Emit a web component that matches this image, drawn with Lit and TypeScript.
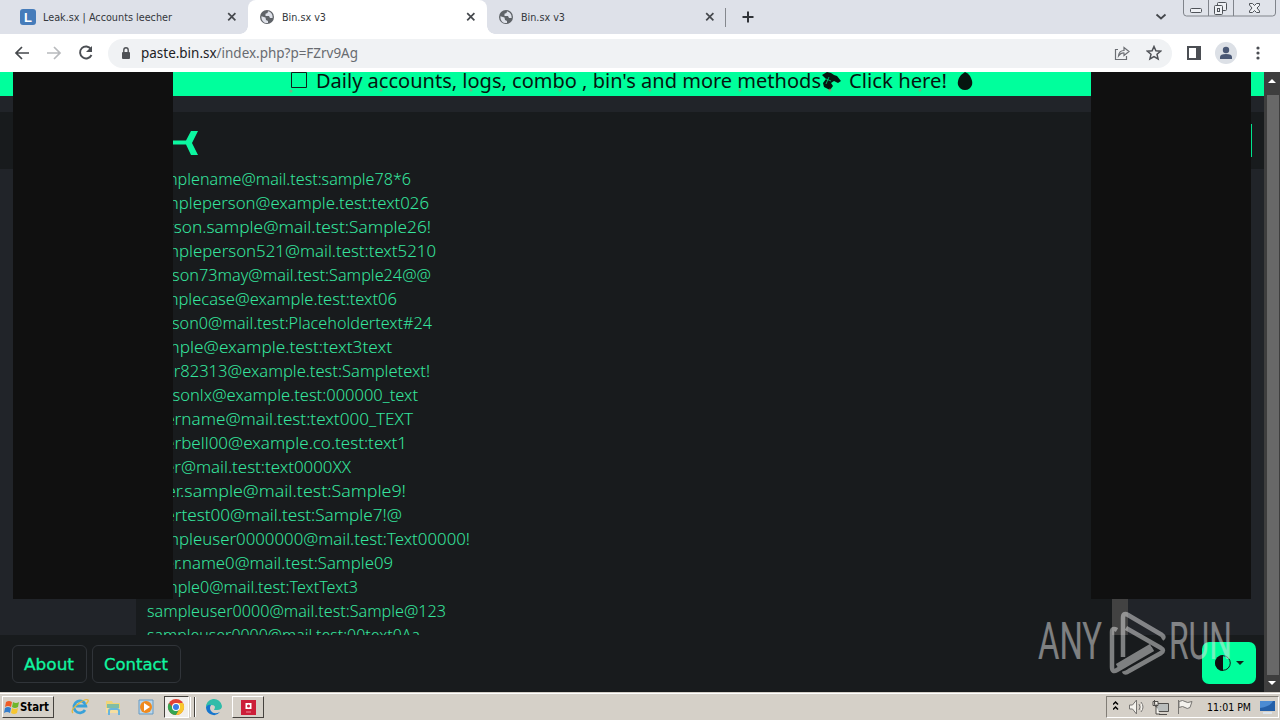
import { html, css, svg, LitElement } from 'lit';
import { customElement } from 'lit/decorators.js';

// Sample entries: text and rendered width
const ENTRIES: [string, number][] = [
  ['samplename@mail.test:sample78*6', 264],
  ['sampleperson@example.test:text026', 282],
  ['person.sample@mail.test:Sample26!', 284],
  ['sampleperson521@mail.test:text5210', 289],
  ['person73may@mail.test:Sample24@@', 284],
  ['samplecase@example.test:text06', 250],
  ['person0@mail.test:Placeholdertext#24', 285],
  ['sample@example.test:text3text', 245],
  ['user82313@example.test:Sampletext!', 283],
  ['personlx@example.test:000000_text', 271],
  ['username@mail.test:text000_TEXT', 266],
  ['userbell00@example.co.test:text1', 260],
  ['user@mail.test:text0000XX', 204],
  ['user.sample@mail.test:Sample9!', 259],
  ['usertest00@mail.test:Sample7!@', 255],
  ['sampleuser0000000@mail.test:Text00000!', 323],
  ['user.name0@mail.test:Sample09', 246],
  ['sample0@mail.test:TextText3', 211],
  ['sampleuser0000@mail.test:Sample@123', 299],
  ['sampleuser0000@mail.test:00text0Aa', 273],
];

const label = (text: string, width: number, size: number, height = 24, base = 17) => html`
  <svg class="label" width=${width} height=${height}>
    <text x="0" y=${base} font-size=${size} textLength=${width} lengthAdjust="spacingAndGlyphs">${text}</text>
  </svg>
`;

const globe = html`
  <svg width="16" height="16" viewBox="0 0 16 16">
    <circle cx="8" cy="8" r="7" fill="#5f6368" />
    <path d="M2.4 7.2 6.5 8.5 7 11l2 1v2C5 14.5 2.2 12 2.4 7.2M9 2.3 8.5 4l-2 .7V7H10l1 2h2.6C14 5.6 12 3 9 2.3" fill="#dee1e9" />
  </svg>
`;

const cross = html`
  <svg class="cross" width="10" height="10"><path d="m1.2 1.2 7.2 7.2m0-7.2L1.2 8.4" fill="none" stroke="#45484d" stroke-width="1.7" /></svg>
`;

@customElement('tab-strip')
class TabStrip extends LitElement {
  static styles = css`
    :host {
      display: flex;
      height: 34px;
      background: #dee1e9;
      color: #34373c;
      font-family: 'DejaVu Sans Condensed', 'DejaVu Sans', sans-serif;
    }

    svg {
      display: block;
      flex: none;
    }

    .label {
      overflow: visible;
      fill: currentColor;
    }

    .tab {
      display: flex;
      align-items: center;
      box-sizing: border-box;
      width: 239px;
      padding: 0 11px 0 11px;
      gap: 7px;
    }

    .tab_first {
      width: 248px;
      padding: 0 11px 0 20px;
    }

    .tab__letter {
      font-family: 'Liberation Sans', sans-serif;
      font-weight: 700;
    }

    .tab_active {
      position: relative;
      background: #fff;
      border-radius: 8px 8px 0 0;
    }

    .tab_active::before,
    .tab_active::after {
      content: '';
      position: absolute;
      bottom: 0;
      width: 8px;
      height: 8px;
    }

    .tab_active::before {
      left: -8px;
      background: radial-gradient(circle at 0 0, transparent 7.5px, #fff 8px);
    }

    .tab_active::after {
      right: -8px;
      background: radial-gradient(circle at 100% 0, transparent 7.5px, #fff 8px);
    }

    .cross {
      margin-left: auto;
    }

    .strip__divider {
      width: 1px;
      height: 19px;
      margin: 8px 0 0 -1px;
      background: #85888e;
    }

    .strip__plus {
      margin: 11px 0 0 16px;
    }

    .strip__chevron {
      margin: 13px 16px 0 auto;
    }

    .windows {
      margin-right: 4px;
    }
  `;

  render() {
    return html`
      <div class="tab tab_first">
        <svg width="16" height="16"><rect width="16" height="16" rx="3" fill="#467cba" /><text class="tab__letter" x="4" y="12.500" font-size="13" fill="#fff">L</text></svg>
        ${label('Leak.sx | Accounts leecher', 129, 11, 16, 12)} ${cross}
      </div>
      <div class="tab tab_active">${globe} ${label('Bin.sx v3', 44, 11, 16, 12)} ${cross}</div>
      <div class="tab">${globe} ${label('Bin.sx v3', 44, 11, 16, 12)} ${cross}</div>
      <div class="strip__divider"></div>
      <svg class="strip__plus" width="12" height="12"><path d="M6 .5v11M.5 6h11" stroke="#303338" stroke-width="2" /></svg>
      <svg class="strip__chevron" width="12" height="9"><path d="m1.5 1.5 4.5 4 4.500-4" fill="none" stroke="#44474c" stroke-width="1.800" /></svg>
      <svg class="windows" width="93" height="17" fill="#eef0f4" stroke="#80848b">
        <path d="M.5-1v14q0 3 3 3h86q3 0 3-3V-1z" fill="#e0e3ea" />
        <path d="M25.5 0v16M50.500 0v16" />
        <g stroke="#4f5359">
          <rect x="7.500" y="8.500" width="11" height="4" rx="1" />
          <rect x="34.500" y="2.500" width="9" height="8" rx="1" />
          <rect x="31.500" y="5.500" width="8" height="9" rx="1" />
          <rect x="34.500" y="8.500" width="2" height="3" />
          <path d="M66.500 3.500h3l2 2 2-2h3v2L74 8l2.500 3v1.500h-3l-2-2-2 2h-3V11L69 8l-2.500-3z" />
        </g>
      </svg>
    `;
  }
}

@customElement('nav-bar')
class NavBar extends LitElement {
  static styles = css`
    :host {
      display: flex;
      align-items: center;
      box-sizing: border-box;
      height: 38px;
      padding: 0 15px 0 14px;
      background: #fff;
      font-family: 'Noto Sans', sans-serif;
    }

    svg {
      display: block;
      flex: none;
    }

    .back,
    .forward {
      margin-right: 16px;
    }

    .label {
      overflow: visible;
    }

    .address {
      display: flex;
      align-items: center;
      box-sizing: border-box;
      width: 1064px;
      height: 29px;
      margin-left: 13px;
      padding: 0 10px 0 13px;
      border-radius: 15px;
      background: #f0f2f4;
    }

    .address__lock {
      margin-right: 10px;
    }

    .address__share {
      margin: 0 16px 0 auto;
    }

    .panel {
      margin: 0 14px 0 15px;
    }

    .menu {
      margin-left: auto;
    }
  `;

  render() {
    return html`
      <svg class="back" width="16" height="16"><path d="M15 8H2m6-6L2 8l6 6" fill="none" stroke="#45484c" stroke-width="1.7" /></svg>
      <svg class="forward" width="16" height="16"><path d="M1 8h13M8 2l6 6-6 6" fill="none" stroke="#b8babd" stroke-width="1.7" /></svg>
      <svg width="17" height="16"><path d="M13 4A6 6 0 1 0 13.500 10" fill="none" stroke="#4b4e53" stroke-width="1.900" /><path d="M14 1v6H8z" fill="#4b4e53" /></svg>
      <div class="address">
        <svg class="address__lock" width="10" height="13"><rect x="1" y="5" width="8" height="7" rx="1" fill="#4f5256" /><path d="M2.800 5V3a2.200 2.200 0 0 1 4.400 0v2" fill="none" stroke="#4f5256" stroke-width="1.400" /></svg>
        <svg class="label" width="217" height="20">
          <text y="15" font-size="14" textLength="217" lengthAdjust="spacingAndGlyphs" fill="#202124">paste.bin.sx<tspan fill="#686b70">/index.php?p=FZrv9Ag</tspan></text>
        </svg>
        <svg class="address__share" width="16" height="16"><path d="M4 4.500H1.500v10h11V11M4.500 11Q5 5.500 10 5.500V2.500l5 4-5 4V8Q7 7.500 4.500 11z" fill="none" stroke="#6b6e73" stroke-width="1.200" /></svg>
        <svg width="16" height="16"><path d="m8 1.500 1.900 4.300 4.700.4-3.600 3.100 1.100 4.600L8 11.500l-4.100 2.400L5 9.300 1.400 6.200l4.700-.4z" fill="none" stroke="#4f5257" stroke-width="1.500" /></svg>
      </div>
      <svg class="panel" width="14" height="14"><path d="M1 1h12v12H1z" fill="#fff" stroke="#4b4e53" stroke-width="2" /><path d="M9 1h4v12H9z" fill="#4b4e53" /></svg>
      <svg width="22" height="22"><circle cx="11" cy="11" r="11" fill="#dce0e6" /><circle cx="11" cy="8" r="3.200" fill="#4a5875" /><path d="M5 17v-2q0-3 6-3t6 3v2z" fill="#4a5875" /></svg>
      <svg class="menu" width="14" height="14" fill="#4b4e53"><circle cx="7" cy="2" r="1.600" /><circle cx="7" cy="7" r="1.600" /><circle cx="7" cy="12" r="1.600" /></svg>
    `;
  }
}

@customElement('paste-page')
class PastePage extends LitElement {
  static styles = css`
    :host {
      position: relative;
      display: flex;
      height: 620px;
      overflow: hidden;
      background: #212429;
      color: #00ff9c;
      font-family: 'DejaVu Sans Condensed', 'DejaVu Sans', sans-serif;
    }

    svg {
      display: block;
      flex: none;
    }

    .page {
      display: flex;
      flex-direction: column;
      width: 1264px;
    }

    .banner {
      height: 24px;
      margin-bottom: 16px;
      padding-left: 290px;
      background: #00ff9c;
      color: #06150f;
      font-family: 'Noto Sans', sans-serif;
    }

    .header {
      display: flex;
      align-items: center;
      box-sizing: border-box;
      height: 57px;
      padding: 5px 12px 0 171px;
      background: #181b1d;
    }

    .header__edge {
      width: 1px;
      height: 33px;
      margin: -6px 0 0 auto;
      background: #00e58f;
    }

    .paste {
      display: flex;
      box-sizing: border-box;
      width: 992px;
      height: 466px;
      margin-left: 136px;
      padding-left: 11px;
      overflow: hidden;
      background: #181b1d;
      color: #35e59d;
      font-family: 'Noto Sans', sans-serif;
      font-weight: 300;
    }

    .paste__lines {
      flex: 1;
    }

    .paste__bar {
      width: 16px;
      background: #424242;
    }

    .label {
      overflow: visible;
      fill: currentColor;
    }

    .footer {
      display: flex;
      align-items: flex-start;
      box-sizing: border-box;
      height: 57px;
      padding: 7px 8px 0 12px;
      gap: 5px;
      background: #181b1d;
      color: #10f5a0;
      font-family: 'DejaVu Sans', sans-serif;
    }

    .footer__button {
      box-sizing: border-box;
      height: 38px;
      margin-top: 3px;
      padding: 6px 12px 0 11px;
      border: 1px solid #303439;
      border-radius: 6px;
    }

    .footer__button .label {
      stroke: currentColor;
      stroke-width: 0.3px;
    }

    .footer__theme {
      display: flex;
      align-items: center;
      justify-content: center;
      gap: 5px;
      width: 54px;
      height: 42px;
      margin-left: auto;
      border-radius: 7px;
      background: #00ff9c;
    }

    .scroll {
      display: flex;
      flex-direction: column;
      align-items: center;
      width: 16px;
      background: #3e3e3e;
    }

    .scroll__thumb {
      width: 12px;
      flex: 1;
      margin: 0 1px 0 3px;
      background: #686868;
    }

    /* Ad slots float over the page */
    .ad {
      position: absolute;
      top: 0;
      left: 13px;
      width: 160px;
      height: 527px;
      background: #101010;
    }

    .ad_right {
      left: 1091px;
    }

    .watermark {
      position: absolute;
      left: 1036px;
      top: 536px;
      font-family: 'Roboto', sans-serif;
      overflow: visible;
    }
  `;

  render() {
    return html`
      <div class="page">
        <div class="banner">
          <svg class="label" width="690" height="24">
            <path d="M1.500 .500h15v15h-15z" fill="none" stroke="#10201a" />
            <text x="26" y="16" font-size="20" textLength="505" lengthAdjust="spacingAndGlyphs">Daily accounts, logs, combo , bin's and more methods</text>
            <path d="m532 3 5-3 4 1 3 2 3 1 4 5-3 2-4-2-3 2 2 3-3 4-6-3-1-4 3-4z" />
            <path d="m536 7 5 2m-2-4-3 7" stroke="#00ff9c" stroke-opacity=".6" />
            <text x="559" y="16" font-size="20" textLength="98" lengthAdjust="spacingAndGlyphs">Click here!</text>
            <path d="M675 0q3 1 5 4 3 5 2 9-2 5-7 5t-7-5q-1-5 3-10z" />
            <g fill="#c08573" opacity=".6"><circle cx="1" cy="19" r="1.500" /><circle cx="91" cy="18" r="1.500" /><circle cx="181" cy="18" r="1.500" /><circle cx="270" cy="18" r="1.500" /><circle cx="360" cy="18" r="1.500" /><circle cx="450" cy="18" r="1.500" /><circle cx="540" cy="18" r="1.500" /><circle cx="630" cy="18" r="1.500" /></g>
          </svg>
        </div>
        <div class="header">
          <svg width="28" height="26"><path d="M0 10.500h15L20 1h7l-6 12 6 12h-7l-5-10.500H0z" fill="#0cf7a0" /></svg>
          <div class="header__edge"></div>
        </div>
        <div class="paste">
          <div class="paste__lines">${ENTRIES.map(([text, width]) => label(text, width, 16, 24, 16))}</div>
          <div class="paste__bar"></div>
        </div>
        <div class="footer">
          <div class="footer__button">${label('About', 50, 16, 24, 18)}</div>
          <div class="footer__button">${label('Contact', 64, 16, 24, 18)}</div>
          <div class="footer__theme">
            <svg width="16" height="16"><circle cx="8" cy="8" r="7.300" fill="none" stroke="#10221a" /><path d="M8 0a8 8 0 0 0 0 16z" fill="#101010" /></svg>
            <svg width="8" height="4"><path d="M0 0h8L4 4z" fill="#10221a" /></svg>
          </div>
        </div>
      </div>
      <div class="scroll">
        <svg width="16" height="23"><path d="m4 11 4-4 4 4z" fill="#fff" /></svg>
        <div class="scroll__thumb"></div>
        <svg width="16" height="17"><path d="m4 6 4 4 4-4z" fill="#fff" /></svg>
      </div>
      <div class="ad"></div>
      <div class="ad ad_right"></div>
      <svg class="watermark" width="200" height="68" opacity=".5">
        ${svg`
          <g fill="#e4e4e4" font-size="51">
            <text transform="translate(2 51)" textLength="64" lengthAdjust="spacingAndGlyphs">ANY</text>
            <text transform="translate(133 51)" textLength="63" lengthAdjust="spacingAndGlyphs">RUN</text>
          </g>
          <path d="M81 22q-5-3-5 2v35q0 6 5 3l36-21M87 49V10q0-6 5-3l34 20q3 2 0 4M90 20l35 20q4 2 0 5L93 63q-4 3-5 0M81 58l34-20" fill="none" stroke="#e4e4e4" stroke-width="4.500" />
        `}
      </svg>
    `;
  }
}

@customElement('task-bar')
class TaskBar extends LitElement {
  static styles = css`
    :host {
      display: flex;
      align-items: center;
      box-sizing: border-box;
      height: 28px;
      padding: 3px 1px 1px 2px;
      background: #d5d0c8;
      box-shadow: inset 0 1px #d5d0c8, inset 0 2px #fff;
      color: #000;
      font-family: 'DejaVu Sans Condensed', 'DejaVu Sans', sans-serif;
    }

    svg {
      display: block;
      flex: none;
    }

    .label {
      overflow: visible;
    }

    .start {
      display: flex;
      align-items: center;
      box-sizing: border-box;
      width: 52px;
      height: 22px;
      padding-left: 1px;
      gap: 1px;
      border: 1px solid #fff;
      border-right-color: #45423e;
      border-bottom-color: #45423e;
      font-weight: 700;
    }

    .quick {
      display: flex;
      align-items: center;
      margin-left: 17px;
      gap: 16px;
    }

    .task {
      display: flex;
      align-items: center;
      justify-content: center;
      box-sizing: border-box;
      width: 32px;
      height: 22px;
      margin-left: 9px;
      border: 1px solid #fff;
      border-right-color: #45423e;
      border-bottom-color: #45423e;
    }

    .task_active {
      justify-content: flex-start;
      width: 25px;
      padding-left: 2px;
      border-color: #45423e #fff #fff #45423e;
      background: #f1efec;
    }

    .task__stack {
      width: 3px;
      height: 20px;
      margin: 0 10px 0 1px;
      border-left: 1px solid #fff;
      border-right: 1px solid #45423e;
      box-shadow: 1px 0 #fff;
    }

    .tray {
      display: flex;
      align-items: center;
      box-sizing: border-box;
      width: 173px;
      height: 22px;
      margin-left: auto;
      padding-left: 6px;
      border: 1px solid #fff;
      border-left-color: #817d76;
      border-top-color: #817d76;
    }

    .tray__icons {
      margin-right: 14px;
    }

    .tray__desktop {
      margin: 0 3px 0 auto;
    }
  `;

  render() {
    return html`
      <div class="start">
        <svg width="15" height="16"><path d="M2 3q3-2 6 0L7 8Q4 6 1 8z" fill="#ef5d28" /><path d="M9 3q3 2 6 0l-1 5q-3 2-6 0z" fill="#70b62c" /><path d="M1 9q3-2 6 0l-1 5q-3-2-6 0z" fill="#347dcc" /><path d="M8 9q3 2 6 0l-1 5q-3 2-6 0z" fill="#f7c631" /></svg>
        ${label('Start', 29, 12, 16, 12)}
      </div>
      <div class="quick">
        <svg width="18" height="18"><path d="M14 12a6 6 0 1 1 .8-4H5" fill="none" stroke="#39a1d9" stroke-width="2.800" /><path d="M2 15Q-1 12 7 6t10-4q1 1-2 4" fill="none" stroke="#e4b83d" stroke-width="1.300" /></svg>
        <svg width="16" height="18"><path d="M1 3h6l1 2h7v10H1z" fill="#f0d477" /><path d="M2 6h12v4H2z" fill="#80bda4" /><path d="M1 10h14v5H1z" fill="#f6dea0" /><path d="M4 17v-4q0-2 2-2h6q2 0 2 2v4" fill="none" stroke="#68b5dd" stroke-width="2" /></svg>
        <svg width="18" height="18"><path d="M2 2h14v14H2z" fill="#b9d7ec" stroke="#679ac3" /><circle cx="9" cy="9" r="6" fill="#f08a1d" /><path d="m7 5 6 4-6 4z" fill="#fff" /></svg>
      </div>
      <div class="task task_active">
        <svg width="18" height="18"><circle cx="9" cy="9" r="8" fill="#e34134" /><path d="M2 5a8 8 0 0 0 7 12l4-7-6 1z" fill="#35a652" /><path d="M9 17a8 8 0 0 0 7-12H9l4 5z" fill="#f8c72c" /><circle cx="9" cy="9" r="4" fill="#fff" /><circle cx="9" cy="9" r="3" fill="#397ee5" /></svg>
      </div>
      <div class="task__stack"></div>
      <svg width="18" height="18"><path d="M1 10A8 8 0 0 1 17 8q0 4-5 4H9q3-5-3-5-4 0-5 3" fill="#30bca9" /><path d="M1 9q2-3 5-2-2 3 0 6 3 4 9 1-4 5-10 2-4-2-4-7" fill="#1676ce" /></svg>
      <div class="task">
        <svg width="15" height="15"><path d="M0 0h15v15H0z" fill="#cc1e38" /><path d="M4.500 3h6v6h-6z" fill="#fff" /><circle cx="7.500" cy="6" r="1.500" fill="#cc1e38" /><path d="M5 12h5" stroke="#ee8a98" /></svg>
      </div>
      <div class="tray">
        <svg class="tray__icons" width="80" height="18" fill="#f4f2ed" stroke="#777572">
          <path d="m0 6.500 2.500-2.500L5 6.500m-5 5 2.500-2.500L5 11.500" fill="none" stroke="#000" stroke-width="1.500" />
          <path d="M16.500 7h3l4-5v14l-4-5h-3zM26 6q2 3 0 6m2-8q4 5 0 10" />
          <path d="M43.500 5.500h12v8h-12z" fill="#b9bdbc" stroke="#504e4b" /><path d="M46 16.500h8M41.500 2v4q0 3 3 3M40 3.500h5v4h-5zM43 8v8h4" stroke="#504e4b" />
          <path d="M65.500 2v14M66 3.500q4-2 6 0t7 0l-2 6q-3 2-5 0t-6 0z" />
        </svg>
        ${label('11:01 PM', 44, 11, 16, 12)}
        <svg class="tray__desktop" width="16" height="16"><path d="M1 2h15v10H1z" fill="#245fa8" /><path d="M1 2h13q-3 6-13 7z" fill="#4b8bd3" /><path d="M4 13h9v2H4z" fill="#dce4ec" /></svg>
      </div>
    `;
  }
}

@customElement('app-root')
class AppRoot extends LitElement {
  static styles = css`
    :host {
      display: block;
      width: 1280px;
      height: 720px;
      overflow: hidden;
    }
  `;

  render() {
    return html`
      <tab-strip></tab-strip>
      <nav-bar></nav-bar>
      <paste-page></paste-page>
      <task-bar></task-bar>
    `;
  }
}
